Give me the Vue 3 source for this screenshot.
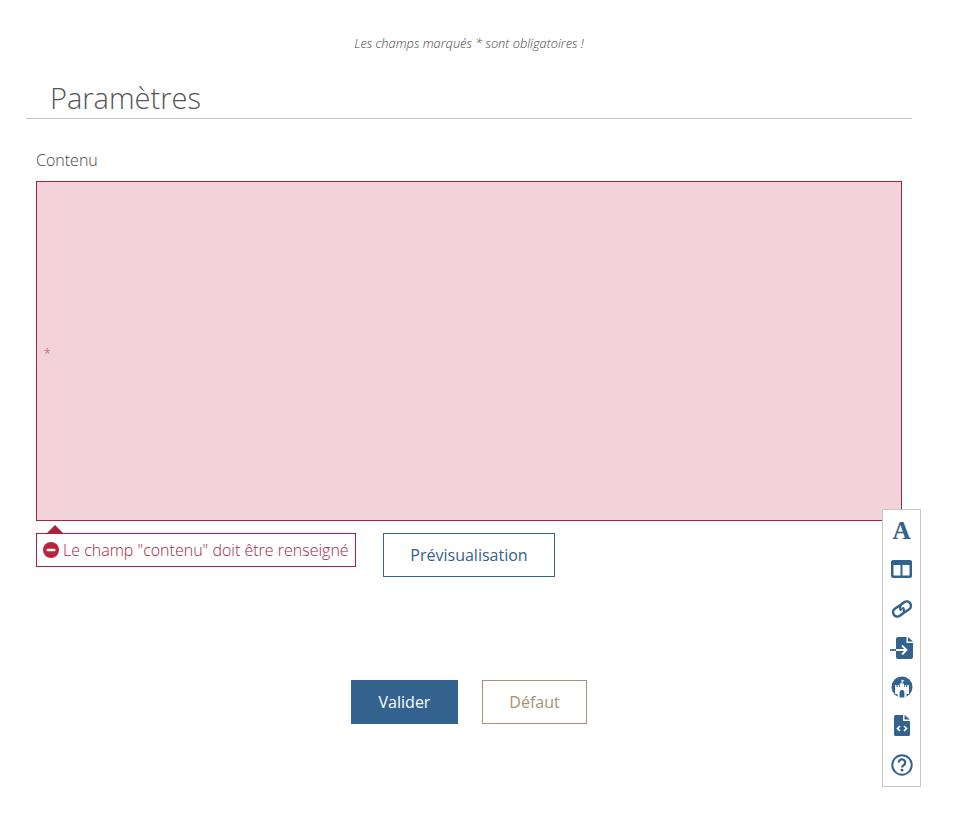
<script setup>
const note = 'Les champs marqués * sont obligatoires !'
</script>

<template>
  <div class="page">
    <p class="note">{{ note }}</p>
    <h2 class="title">Paramètres</h2>
    <label class="label">Contenu</label>
    <div class="editor"><span class="star">*</span></div>
    <div class="under">
      <div class="error">
        <span class="arrow"></span>
        <svg class="err-icon" viewBox="0 0 16 16" width="16" height="16"><circle cx="8" cy="8" r="8" fill="#b8243f"/><rect x="3.500" y="6.700" width="9" height="2.600" rx="1" fill="#fff"/></svg>
        <span>Le champ "contenu" doit être renseigné</span>
      </div>
      <button class="btn preview">Prévisualisation</button>
    </div>
    <div class="actions">
      <button class="btn primary">Valider</button>
      <button class="btn default">Défaut</button>
    </div>
    <div class="toolbar">
      <div class="slot"><span class="letter">A</span></div>
      <div class="slot"><svg class="up" viewBox="0 0 21 18" width="21" height="18"><path fill-rule="evenodd" fill="#34628f" d="M2 0h17a2 2 0 0 1 2 2v14a2 2 0 0 1-2 2H2a2 2 0 0 1-2-2V2a2 2 0 0 1 2-2zM2.500 5v10.500h7V5zm9 0v10.500h7V5z"/></svg></div>
      <div class="slot"><svg viewBox="0 0 24 20" width="24" height="20"><g fill="none" stroke="#34628f" stroke-width="2.600" stroke-linecap="round" transform="translate(12 10) rotate(-35) scale(.95) translate(-12 0)"><path d="M12 -4.500H6a4.500 4.500 0 0 0 0 9H9a4.500 4.500 0 0 0 4.500-4.500"/><path d="M12 4.500H18a4.500 4.500 0 0 0 0-9H15a4.500 4.500 0 0 0-4.500 4.500"/></g></svg></div>
      <div class="slot"><svg viewBox="0 0 23 22" width="23" height="22"><path fill="#34628f" d="M8 0h8.500v6H23v14a2 2 0 0 1-2 2H8a2 2 0 0 1-2-2V2a2 2 0 0 1 2-2zM18 0l5 4.500h-5z"/><path fill="none" stroke="#34628f" stroke-width="1.800" d="M0 13h6"/><path fill="none" stroke="#fff" stroke-width="1.800" d="M6 13h10M12 8.500l4.500 4.500-4.500 4.500"/></svg></div>
      <div class="slot"><svg viewBox="0 0 22 22" width="22" height="22"><defs><clipPath id="castle-clip"><circle cx="11" cy="11" r="10.500"/></clipPath></defs><circle cx="11" cy="11" r="10.500" fill="#34628f"/><g clip-path="url(#castle-clip)"><path fill="#fff" d="M4 11V9h1.500v2h1.200V9h1.300v2h.8V7.500h1.700V3.500l3 1.300-2 .9v1.800H13V11h.8V9h1.300v2h1.200V9H18v9h-2.500v4h-9v-4H4z"/><path fill="#34628f" d="M8.600 22v-5.500a2.400 2.400 0 0 1 4.800 0V22z"/></g></svg></div>
      <div class="slot"><svg viewBox="0 0 16 21" width="16" height="21"><path fill="#34628f" d="M1.500 0H9v6h7v13.500a1.500 1.500 0 0 1-1.500 1.500h-13A1.500 1.500 0 0 1 0 19.500v-18A1.500 1.500 0 0 1 1.500 0zM10.500 0 16 4.500h-5.500z"/><path fill="none" stroke="#fff" stroke-width="1.700" d="M6 11 3.500 13.500 6 16M10 11l2.500 2.500L10 16"/></svg></div>
      <div class="slot"><svg viewBox="0 0 22 22" width="22" height="22"><circle cx="11" cy="11" r="9.700" fill="none" stroke="#34628f" stroke-width="2"/><path fill="none" stroke="#34628f" stroke-width="2.200" d="M7.800 8.500a3.200 3.200 0 1 1 4.900 2.700c-1 .6-1.700 1-1.700 2.300"/><circle cx="11" cy="16.200" r="1.400" fill="#34628f"/></svg></div>
    </div>
  </div>
</template>

<style scoped>
.page { position: relative; width: 964px; height: 827px; font-family: "Open Sans", sans-serif; color: #555; box-sizing: border-box; padding-top: 36px; background: #fff; overflow: hidden; }
.note { margin: 0; text-align: center; width: 938px; font-size: 12.800px; font-style: italic; font-weight: 300; line-height: 15px; color: #444; }
.title { margin: 24px 0 0 26px; width: 886px; box-sizing: border-box; padding: 0 0 0 24px; height: 44px; line-height: 46px; font-size: 29px; font-weight: 300; color: #555; border-bottom: 1px solid #c8c8c8; }
.label { display: block; margin: 30px 0 0 36px; font-size: 16px; font-weight: 300; line-height: 22px; color: #444; }
.editor { margin: 10px 0 0 36px; width: 866px; height: 340px; box-sizing: border-box; border: 1px solid #a9213f; background: #f3d3da; display: flex; align-items: center; padding-left: 7px; }
.star { position: relative; top: 2px; color: #d9698d; font-size: 12px; font-weight: 400; }
.under { display: flex; align-items: flex-start; margin: 12px 0 0 36px; gap: 27px; }
.error { position: relative; display: flex; align-items: center; gap: 4px; width: 320px; height: 34px; box-sizing: border-box; padding: 0 0 0 6px; border: 1px solid #a9213f; font-size: 16px; font-weight: 300; color: #a3263f; white-space: nowrap; }
.arrow { position: absolute; left: 10px; top: -9px; border: 8px solid transparent; border-top: 0; border-bottom-color: #a9213f; }
.btn { font-family: inherit; font-size: 16px; height: 44px; box-sizing: border-box; background: #fff; }
.preview { width: 172px; border: 1px solid #34628f; color: #34628f; }
.actions { display: flex; justify-content: center; width: 938px; gap: 24px; margin-top: 103px; }
.primary { width: 107px; border: 0; background: #34628f; color: #fff; font-weight: 500; }
.default { width: 105px; border: 1px solid #a99272; color: #a99272; }
.toolbar { position: absolute; left: 882px; top: 509px; width: 39px; height: 278px; box-sizing: border-box; border: 1px solid #c8c8c8; background: #fff; padding-top: 1px; }
.slot { height: 39px; display: flex; align-items: center; justify-content: center; }
.up { margin-top: -2px; }
.letter { font-family: "Liberation Serif", serif; font-size: 25px; font-weight: 700; color: #34628f; line-height: 22px; -webkit-text-stroke: 0.2px #34628f; }
</style>
